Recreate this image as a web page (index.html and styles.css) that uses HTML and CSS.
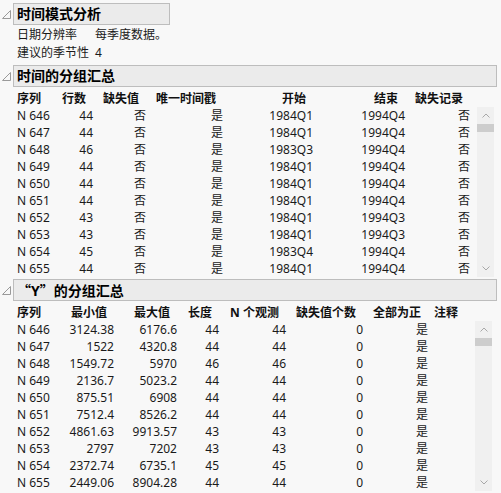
FILE: index.html
```html
<!DOCTYPE html>
<html lang="zh-CN">
<head>
    <meta charset="UTF-8">
    <title>时间模式分析</title>
    <link rel="stylesheet" href="styles.css">
</head>
<body>

    <section class="outline first">
        <div class="outline-head">
            <svg class="toggle" width="9" height="9" viewBox="0 0 9 9"><polygon points="0.5,8.5 8.5,0.5 8.5,8.5" /></svg>
            <div class="title-box short">时间模式分析</div>
        </div>
        <div class="outline-body info">
            <span>日期分辨率</span><span>每季度数据。</span>
            <span>建议的季节性</span><span>4</span>
        </div>
    </section>

    <section class="outline">
        <div class="outline-head">
            <svg class="toggle" width="9" height="9" viewBox="0 0 9 9"><polygon points="0.5,8.5 8.5,0.5 8.5,8.5" /></svg>
            <div class="title-box">时间的分组汇总</div>
        </div>
        <div class="outline-body">
            <table class="report t-time">
                <colgroup>
                    <col style="width:43px"><col style="width:33px"><col style="width:53px"><col style="width:77px">
                    <col style="width:90px"><col style="width:92px"><col style="width:65px"><col style="width:5px"><col style="width:17px">
                </colgroup>
                <thead>
                    <tr><th class="left">序列</th><th>行数</th><th>缺失值</th><th>唯一时间戳</th><th>开始</th><th>结束</th><th>缺失记录</th><th></th><th></th></tr>
                </thead>
                <tbody>
                    <tr><td class="left">N 646</td><td>44</td><td>否</td><td>是</td><td>1984Q1</td><td>1994Q4</td><td>否</td><td></td>
                        <td rowspan="10" class="sb-cell">
                            <div class="scrollbar">
                                <div class="sb-btn"><svg width="8" height="5" viewBox="0 0 8 5"><polyline points="0.5,4.5 4,1 7.5,4.5" /></svg></div>
                                <div class="sb-thumb"></div>
                                <div class="sb-track"></div>
                                <div class="sb-btn"><svg width="8" height="5" viewBox="0 0 8 5"><polyline points="0.5,0.5 4,4 7.5,0.5" /></svg></div>
                            </div>
                        </td></tr>
                    <tr><td class="left">N 647</td><td>44</td><td>否</td><td>是</td><td>1984Q1</td><td>1994Q4</td><td>否</td><td></td></tr>
                    <tr><td class="left">N 648</td><td>46</td><td>否</td><td>是</td><td>1983Q3</td><td>1994Q4</td><td>否</td><td></td></tr>
                    <tr><td class="left">N 649</td><td>44</td><td>否</td><td>是</td><td>1984Q1</td><td>1994Q4</td><td>否</td><td></td></tr>
                    <tr><td class="left">N 650</td><td>44</td><td>否</td><td>是</td><td>1984Q1</td><td>1994Q4</td><td>否</td><td></td></tr>
                    <tr><td class="left">N 651</td><td>44</td><td>否</td><td>是</td><td>1984Q1</td><td>1994Q4</td><td>否</td><td></td></tr>
                    <tr><td class="left">N 652</td><td>43</td><td>否</td><td>是</td><td>1984Q1</td><td>1994Q3</td><td>否</td><td></td></tr>
                    <tr><td class="left">N 653</td><td>43</td><td>否</td><td>是</td><td>1984Q1</td><td>1994Q3</td><td>否</td><td></td></tr>
                    <tr><td class="left">N 654</td><td>45</td><td>否</td><td>是</td><td>1983Q4</td><td>1994Q4</td><td>否</td><td></td></tr>
                    <tr><td class="left">N 655</td><td>44</td><td>否</td><td>是</td><td>1984Q1</td><td>1994Q4</td><td>否</td><td></td></tr>
                </tbody>
            </table>
        </div>
    </section>

    <section class="outline">
        <div class="outline-head">
            <svg class="toggle" width="9" height="9" viewBox="0 0 9 9"><polygon points="0.5,8.5 8.5,0.5 8.5,8.5" /></svg>
            <div class="title-box"><span class="cjk">“</span>Y<span class="cjk">”</span>的分组汇总</div>
        </div>
        <div class="outline-body">
            <table class="report t-y">
                <colgroup>
                    <col style="width:43px"><col style="width:54px"><col style="width:63px"><col style="width:42px">
                    <col style="width:67px"><col style="width:77px"><col style="width:65px"><col style="width:37px"><col style="width:10px"><col style="width:17px">
                </colgroup>
                <thead>
                    <tr><th class="left">序列</th><th>最小值</th><th>最大值</th><th>长度</th><th>N 个观测</th><th>缺失值个数</th><th>全部为正</th><th>注释</th><th></th><th></th></tr>
                </thead>
                <tbody>
                    <tr><td class="left">N 646</td><td>3124.38</td><td>6176.6</td><td>44</td><td>44</td><td>0</td><td>是</td><td></td><td></td>
                        <td rowspan="10" class="sb-cell">
                            <div class="scrollbar">
                                <div class="sb-btn"><svg width="8" height="5" viewBox="0 0 8 5"><polyline points="0.5,4.5 4,1 7.5,4.5" /></svg></div>
                                <div class="sb-thumb"></div>
                                <div class="sb-track"></div>
                                <div class="sb-btn"><svg width="8" height="5" viewBox="0 0 8 5"><polyline points="0.5,0.5 4,4 7.5,0.5" /></svg></div>
                            </div>
                        </td></tr>
                    <tr><td class="left">N 647</td><td>1522</td><td>4320.8</td><td>44</td><td>44</td><td>0</td><td>是</td><td></td><td></td></tr>
                    <tr><td class="left">N 648</td><td>1549.72</td><td>5970</td><td>46</td><td>46</td><td>0</td><td>是</td><td></td><td></td></tr>
                    <tr><td class="left">N 649</td><td>2136.7</td><td>5023.2</td><td>44</td><td>44</td><td>0</td><td>是</td><td></td><td></td></tr>
                    <tr><td class="left">N 650</td><td>875.51</td><td>6908</td><td>44</td><td>44</td><td>0</td><td>是</td><td></td><td></td></tr>
                    <tr><td class="left">N 651</td><td>7512.4</td><td>8526.2</td><td>44</td><td>44</td><td>0</td><td>是</td><td></td><td></td></tr>
                    <tr><td class="left">N 652</td><td>4861.63</td><td>9913.57</td><td>43</td><td>43</td><td>0</td><td>是</td><td></td><td></td></tr>
                    <tr><td class="left">N 653</td><td>2797</td><td>7202</td><td>43</td><td>43</td><td>0</td><td>是</td><td></td><td></td></tr>
                    <tr><td class="left">N 654</td><td>2372.74</td><td>6735.1</td><td>45</td><td>45</td><td>0</td><td>是</td><td></td><td></td></tr>
                    <tr><td class="left">N 655</td><td>2449.06</td><td>8904.28</td><td>44</td><td>44</td><td>0</td><td>是</td><td></td><td></td></tr>
                </tbody>
            </table>
        </div>
    </section>

</body>
</html>
```

FILE: styles.css
```css
/* relatório estilo JMP */
body { margin: 0; background-color: #f8f8f8; color: #1a1a1a; font-family: "Noto Sans", "Noto Sans CJK SC", sans-serif; font-size: 12px; }
.outline { margin-top: 2px; }
.outline.first { margin-top: 3px; }
.outline-head { display: flex; align-items: center; height: 22px; padding-right: 4px; }
.toggle { margin: 0 2px 0 2px; flex: none; }
.toggle polygon { fill: none; stroke: #9a9a9a; stroke-width: 1; }
.title-box { flex: 1; box-sizing: border-box; height: 22px; line-height: 20px; padding-left: 3px; background-color: #ebebeb; border: 1px solid #bdbdbd; font-size: 14px; font-weight: bold; color: #000; white-space: nowrap; }
.title-box.short { flex: none; width: 157px; }
.cjk { font-family: "Noto Sans CJK SC", sans-serif; }
.outline-body { padding-left: 17px; }
.info { display: grid; grid-template-columns: 78px auto; line-height: 18px; padding-top: 1px; padding-bottom: 1px; }

.report { border-collapse: collapse; border-spacing: 0; table-layout: fixed; margin-top: 3px; }
.report th, .report td { padding: 0; height: 17px; line-height: 17px; text-align: right; white-space: nowrap; overflow: visible; }
.report th { font-weight: bold; padding-right: 7px; color: #111; }
.report th.left, .report td.left { text-align: left; padding-right: 0; }
.report td.sb-cell { vertical-align: top; }

.scrollbar { width: 17px; height: 170px; background-color: #f0f0f0; display: flex; flex-direction: column; }
.sb-btn { height: 17px; display: flex; align-items: center; justify-content: center; flex: none; }
.sb-btn polyline { fill: none; stroke: #a8a8a8; stroke-width: 1; }
.sb-thumb { height: 8px; background-color: #cdcdcd; flex: none; }
.sb-track { flex: 1; }
```
